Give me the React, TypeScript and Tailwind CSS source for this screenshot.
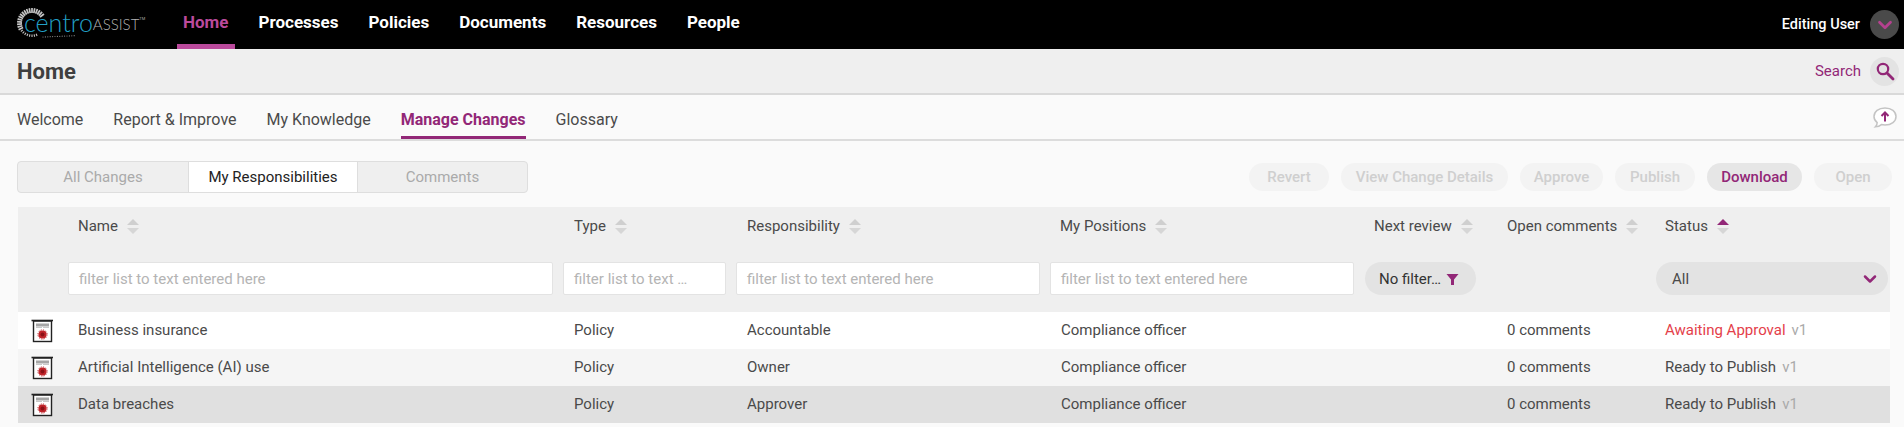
import { ChevronDown } from 'lucide-react';

const navItems = ['Home', 'Processes', 'Policies', 'Documents', 'Resources', 'People'];
const tabs = ['Welcome', 'Report & Improve', 'My Knowledge', 'Manage Changes', 'Glossary'];
const gridCols = 'grid grid-cols-[50px_495px_172px_315px_315px_133px_158px_234px]';

const actions = [
  { label: 'Revert', width: 'w-[80px]' },
  { label: 'View Change Details', width: 'w-[167px]' },
  { label: 'Approve', width: 'w-[83px]' },
  { label: 'Publish', width: 'w-[80px]' },
  { label: 'Download', width: 'w-[95px]', active: true },
  { label: 'Open', width: 'w-[78px]' },
];

const rows = [
  { name: 'Business insurance', resp: 'Accountable', status: 'Awaiting Approval', bg: 'bg-white', red: true },
  { name: 'Artificial Intelligence (AI) use', resp: 'Owner', status: 'Ready to Publish', bg: 'bg-[#f5f5f5]' },
  { name: 'Data breaches', resp: 'Approver', status: 'Ready to Publish', bg: 'bg-[#e0e0e0]' },
];

function Logo() {
  const rays = Array.from({ length: 34 }, (_, i) => i);
  const dots = Array.from({ length: 14 }, (_, i) => i);
  return (
    <div className="relative flex h-[36px] w-[130px] items-center">
      <svg width="70" height="34" viewBox="0 0 70 34" className="absolute left-0 top-[-2px]">
        {rays.map((i) => {
          const a = (Math.PI * 2 * i) / 34 - Math.PI / 2;
          const deg = (i * 360) / 34;
          // the arc on the right is hidden behind the wordmark
          if (deg > 55 && deg < 150) return null;
          const big = deg <= 55 || deg >= 235;
          const r1 = big ? 10 : 11.5;
          const r2 = big ? 15 : 14;
          return (
            <line
              key={i}
              x1={15 + r1 * Math.cos(a)}
              y1={18 + r1 * Math.sin(a)}
              x2={15 + r2 * Math.cos(a)}
              y2={18 + r2 * Math.sin(a)}
              stroke="#c4c4c4"
              strokeWidth={big ? 1.7 : 1.1}
            />
          );
        })}
        {dots.map((i) => (
          <circle key={i} cx={26 + i * 2.4} cy={32 - i * 0.1} r="0.6" fill="#8a8a8a" />
        ))}
      </svg>
      <span className="relative pb-[5px] pl-[7px] font-['Lato'] text-[25px] font-light leading-none text-[#22a0c8]">
        centro
      </span>
      <span className="relative pb-[1px] font-['Lato'] text-[15px] font-light leading-none text-[#b5b5b5]">ASSIST</span>
      <span className="relative mb-[11px] text-[4px] text-[#a8a8a8]">TM</span>
    </div>
  );
}

function SortArrows({ up }: { up?: boolean }) {
  return (
    <svg width="14" height="17" viewBox="0 0 14 17" className="ml-[8px]">
      <path d="M7 1 L13 7 H1 Z" fill={up ? '#922777' : '#cfcfcf'} />
      <path d="M7 16 L13 10 H1 Z" fill="#d6d6d6" />
    </svg>
  );
}

function HeaderCell({ label, up, className }: { label: string; up?: boolean; className: string }) {
  return (
    <div className={`flex items-center ${className}`}>
      <span>{label}</span>
      <SortArrows up={up} />
    </div>
  );
}

function FilterInput({ width, text }: { width: string; text: string }) {
  return (
    <div className={`flex h-[33px] items-center truncate rounded-[2px] border border-[#e3e3e3] bg-white pl-[10px] pt-[1px] text-[15px] text-[#b4b4b4] ${width}`}>
      {text}
    </div>
  );
}

function PolicyIcon() {
  return (
    <svg width="24" height="24" viewBox="0 0 24 24" className="ml-[13px]">
      <rect x="2.5" y="2" width="18" height="20.5" fill="#fff" stroke="#222" strokeWidth="1.4" />
      <path d="M0.5 1.5 H22" stroke="#222" strokeWidth="1.6" />
      <rect x="5" y="4.5" width="13" height="3" fill="#a6a6a6" />
      <rect x="5" y="8" width="6" height="1" fill="#c9c9c9" />
      <rect x="12" y="8" width="6" height="1" fill="#c9c9c9" />
      <circle cx="11.5" cy="15.5" r="4" fill="#c0242a" />
      <circle cx="11.5" cy="15.5" r="4.6" fill="none" stroke="#c0242a" strokeWidth="1" strokeDasharray="1.2 1.2" />
      <circle cx="11.5" cy="15.5" r="2" fill="#8c1016" />
    </svg>
  );
}

export default function App() {
  return (
    <div className="h-[427px] w-[1904px] overflow-hidden bg-[#fafafa] font-['Roboto',sans-serif] text-[#4a4a4a]">
      <header className="flex h-[49px] items-center justify-between bg-black pl-[17px] pr-[5px]">
        <div className="flex h-full items-center">
          <Logo />
          <nav className="ml-[30px] flex h-full">
            {navItems.map((item, i) => (
              <div
                key={item}
                className={`mr-[18px] flex h-full items-center border-b-[5px] px-[6px] pt-[2px] text-[17px] font-bold ${
                  i === 0 ? 'border-[#bb4a9c] text-[#bb4a9c]' : 'border-transparent text-white'
                }`}
              >
                {item}
              </div>
            ))}
          </nav>
        </div>
        <div className="flex items-center gap-[10px]">
          <span className="text-[14.5px] font-medium text-white">Editing User</span>
          <span className="flex h-[29px] w-[29px] items-center justify-center rounded-full bg-[#4a4a4a]">
            <ChevronDown size={22} strokeWidth={3} className="text-[#b5418f]" />
          </span>
        </div>
      </header>

      <div className="flex h-[46px] items-center justify-between border-b-2 border-[#d9d9d9] bg-[#efefef] pl-[17px] pr-[5px]">
        <h1 className="text-[22px] font-bold text-[#3f3f3f]">Home</h1>
        <div className="flex items-center gap-[9px]">
          <span className="text-[15px] text-[#922777]">Search</span>
          <span className="flex h-[29px] w-[29px] items-center justify-center rounded-full bg-[#e3e3e3]">
            <svg width="20" height="20" viewBox="0 0 20 20">
              <circle cx="8" cy="8" r="5.2" fill="none" stroke="#922777" strokeWidth="2.2" />
              <path d="M12 12 L18 18" stroke="#922777" strokeWidth="2.8" strokeLinecap="round" />
            </svg>
          </span>
        </div>
      </div>

      <div className="flex h-[46px] items-stretch justify-between border-b-2 border-[#dcdcdc] pl-[17px] pr-[6px]">
        <div className="flex gap-[30px]">
          {tabs.map((tab) => (
            <div
              key={tab}
              className={`flex items-center border-b-[3px] pt-[8px] text-[16px] ${
                tab === 'Manage Changes' ? 'border-[#922777] font-bold text-[#922777]' : 'border-transparent text-[#4a4a4a]'
              }`}
            >
              {tab}
            </div>
          ))}
        </div>
        <svg width="26" height="24" viewBox="0 0 26 24" className="mt-[11px]">
          <path
            d="M13 2 C6.5 2 2 5.6 2 10.5 C2 13.2 3.4 15.2 5.2 16.6 C5.2 18.4 4.6 19.6 3.4 20.8 C6 20.6 8 19.8 9.4 18.6 C10.6 18.9 11.8 19 13 19 C19.5 19 24 15.4 24 10.5 C24 5.6 19.5 2 13 2 Z"
            fill="#fff"
            stroke="#c4c4c4"
            strokeWidth="1.5"
          />
          <path d="M13 15.5 V6.5 M9.5 10 L13 6.5 L16.5 10" fill="none" stroke="#922777" strokeWidth="2" />
        </svg>
      </div>

      <div className="flex items-center justify-between pl-[17px] pr-[12px] pt-[20px]">
        <div className="flex h-[32px] w-[511px] overflow-hidden rounded-[4px] border border-[#dedede] bg-[#efefef] text-[15px] text-[#aaa]">
          <div className="flex w-[170px] items-center justify-center">All Changes</div>
          <div className="flex w-[170px] items-center justify-center border-x border-[#dedede] bg-white text-[#222]">
            My Responsibilities
          </div>
          <div className="flex flex-1 items-center justify-center">Comments</div>
        </div>
        <div className="flex gap-[12px]">
          {actions.map((a) => (
            <div
              key={a.label}
              className={`flex h-[28px] items-center justify-center rounded-full text-[15px] font-medium ${a.width} ${
                a.active ? 'bg-[#e6e6e6] font-bold text-[#922777]' : 'bg-[#f3f3f3] text-[#cfcfcf]'
              }`}
            >
              {a.label}
            </div>
          ))}
        </div>
      </div>

      <div className="ml-[18px] mt-[14px] w-[1872px]">
        <div className="bg-[#efefef]">
          <div className={`${gridCols} h-[44px] items-center pb-[5px] text-[15px] text-[#4a4a4a]`}>
            <div />
            <HeaderCell label="Name" className="pl-[10px]" />
            <HeaderCell label="Type" className="pl-[11px]" />
            <HeaderCell label="Responsibility" className="pl-[12px]" />
            <HeaderCell label="My Positions" className="pl-[10px]" />
            <HeaderCell label="Next review" className="pl-[9px]" />
            <HeaderCell label="Open comments" className="pl-[9px]" />
            <HeaderCell label="Status" up className="pl-[9px]" />
          </div>
          <div className={`${gridCols} h-[61px] pt-[11px]`}>
            <div />
            <FilterInput width="w-[485px]" text="filter list to text entered here" />
            <FilterInput width="w-[163px]" text="filter list to text …" />
            <div className="pl-[1px]">
              <FilterInput width="w-[304px]" text="filter list to text entered here" />
            </div>
            <FilterInput width="w-[304px]" text="filter list to text entered here" />
            <div className="flex h-[33px] w-[111px] items-center gap-[5px] rounded-full bg-[#e3e3e3] pl-[14px] pt-[1px] text-[15px] text-[#333]">
              No filter…
              <svg width="13" height="13" viewBox="0 0 13 13">
                <path d="M0.5 1 H12.5 L8 6.5 V12 L5 12 V6.5 Z" fill="#922777" />
              </svg>
            </div>
            <div />
            <div className="flex h-[33px] w-[232px] items-center justify-between rounded-full bg-[#e3e3e3] pl-[16px] pr-[8px] pt-[1px] text-[15px] text-[#4a4a4a]">
              All
              <ChevronDown size={20} strokeWidth={3} className="text-[#922777]" />
            </div>
          </div>
        </div>
        {rows.map((r) => (
          <div key={r.name} className={`${gridCols} h-[37px] items-center text-[15px] text-[#4a4a4a] ${r.bg}`}>
            <PolicyIcon />
            <div className="pl-[10px]">{r.name}</div>
            <div className="pl-[11px]">Policy</div>
            <div className="pl-[12px]">{r.resp}</div>
            <div className="pl-[11px]">Compliance officer</div>
            <div />
            <div className="pl-[9px]">0 comments</div>
            <div className="pl-[9px]">
              <span className={r.red ? 'text-[#e4404a]' : ''}>{r.status}</span>
              <span className="ml-[6px] text-[#aaa]">v1</span>
            </div>
          </div>
        ))}
      </div>
    </div>
  );
}
